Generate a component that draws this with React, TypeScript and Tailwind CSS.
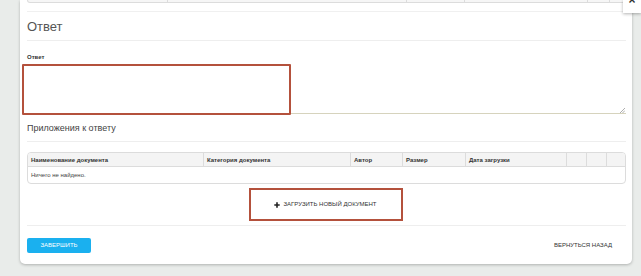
import React from 'react';

const font = { fontFamily: '"Liberation Sans", Arial, sans-serif' };

const headCols = [
  { label: 'Наименование документа', w: 'w-[176px]' },
  { label: 'Категория документа', w: 'w-[147px]' },
  { label: 'Автор', w: 'w-[52px]' },
  { label: 'Размер', w: 'w-[63px]' },
  { label: 'Дата загрузки', w: 'w-[101px]' },
  { label: '', w: 'w-[20px]' },
  { label: '', w: 'w-[20px]' },
  { label: '', w: 'flex-1' },
];

export default function App() {
  return (
    <div
      className="relative w-[641px] h-[276px] overflow-hidden bg-[#e9ecea] text-[#333]"
      style={font}
    >
      <div className="ml-[20px] w-[612px] h-[264px] bg-white rounded-b-[5px] shadow-[0_1px_3px_rgba(0,0,0,0.25)] pl-[7px] pr-[6px]">
        {/* tail of the table above */}
        <div className="flex h-[3px] border border-t-0 border-[#dcdcdc] rounded-b-[4px] bg-[#f6f6f6]">
          <div className="w-[140px] border-r border-[#dcdcdc]" />
          <div className="w-[239px] border-r border-[#dcdcdc]" />
          <div className="w-[58px] border-r border-[#dcdcdc]" />
          <div className="w-[123px] border-r border-[#dcdcdc]" />
          <div className="w-[22px] border-r border-[#dcdcdc]" />
          <div className="flex-1" />
        </div>
        <div className="mt-[8px] border-t border-[#f0f0f0]" />
        <div className="h-[28px] pt-[1px] flex items-center text-[13px] text-[#555]">Ответ</div>
        <div className="border-t border-[#eeeeee]" />

        <div className="mt-[12px] h-[9px] text-[6px] font-bold leading-[9px] text-[#333]">Ответ</div>
        <div className="relative mt-[2px] h-[50px]">
          <div className="h-full border-b border-[#d6d3bd]" />
          <svg className="absolute right-[1px] bottom-[1px]" width="5" height="5" viewBox="0 0 5 5">
            <path d="M0 5 L5 0 M2.5 5 L5 2.5" stroke="#999" strokeWidth="0.8" />
          </svg>
          <div className="absolute left-[-5px] top-0 w-[269px] h-[51px] border-2 border-[#b4513c] rounded-[1px]" />
        </div>

        <div className="mt-[8px] h-[12px] text-[9px] leading-[12px] text-[#444]">Приложения к ответу</div>
        <div className="mt-[7px] border-t border-[#eeeeee]" />

        <div className="mt-[10px] border border-[#dcdcdc] rounded-[4px] overflow-hidden">
          <div className="flex h-[14px] bg-[#f4f4f4] border-b border-[#dcdcdc] text-[6px] font-bold leading-[14px] text-[#333]">
            {headCols.map((c, i) => (
              <div
                key={i}
                className={`${c.w} pl-[3px] ${i < headCols.length - 1 ? 'border-r border-[#dcdcdc]' : ''}`}
              >
                {c.label}
              </div>
            ))}
          </div>
          <div className="h-[16px] pl-[3px] text-[6px] leading-[16px] text-[#444]">Ничего не найдено.</div>
        </div>

        <div className="flex justify-center mt-[4px] pr-[2px]">
          <div className="w-[154px] h-[33px] border-2 border-[#b4513c] flex items-center justify-center gap-[3px] text-[6px] text-[#333] uppercase">
            <svg width="6" height="6" viewBox="0 0 6 6">
              <path d="M3 0.3 V5.7 M0.3 3 H5.7" stroke="#222" strokeWidth="1.6" />
            </svg>
            <span>Загрузить новый документ</span>
          </div>
        </div>
        <div className="mt-[4px] border-t border-[#eeeeee]" />

        <div className="mt-[12px] flex items-center justify-between">
          <div className="w-[64px] h-[15px] bg-[#1ab0ef] rounded-[2px] flex items-center justify-center text-[6px] text-white uppercase">
            Завершить
          </div>
          <div className="mr-[14px] text-[6px] text-[#333] uppercase">Вернуться назад</div>
        </div>
      </div>

      {/* close button overlay */}
      <div className="absolute right-0 top-0 w-[18px] h-[13px] bg-white shadow-[0_1px_3px_rgba(0,0,0,0.3)] flex justify-center">
        <span className="absolute top-[-6px] text-[12px] font-bold text-[#333] leading-none">×</span>
      </div>
    </div>
  );
}
